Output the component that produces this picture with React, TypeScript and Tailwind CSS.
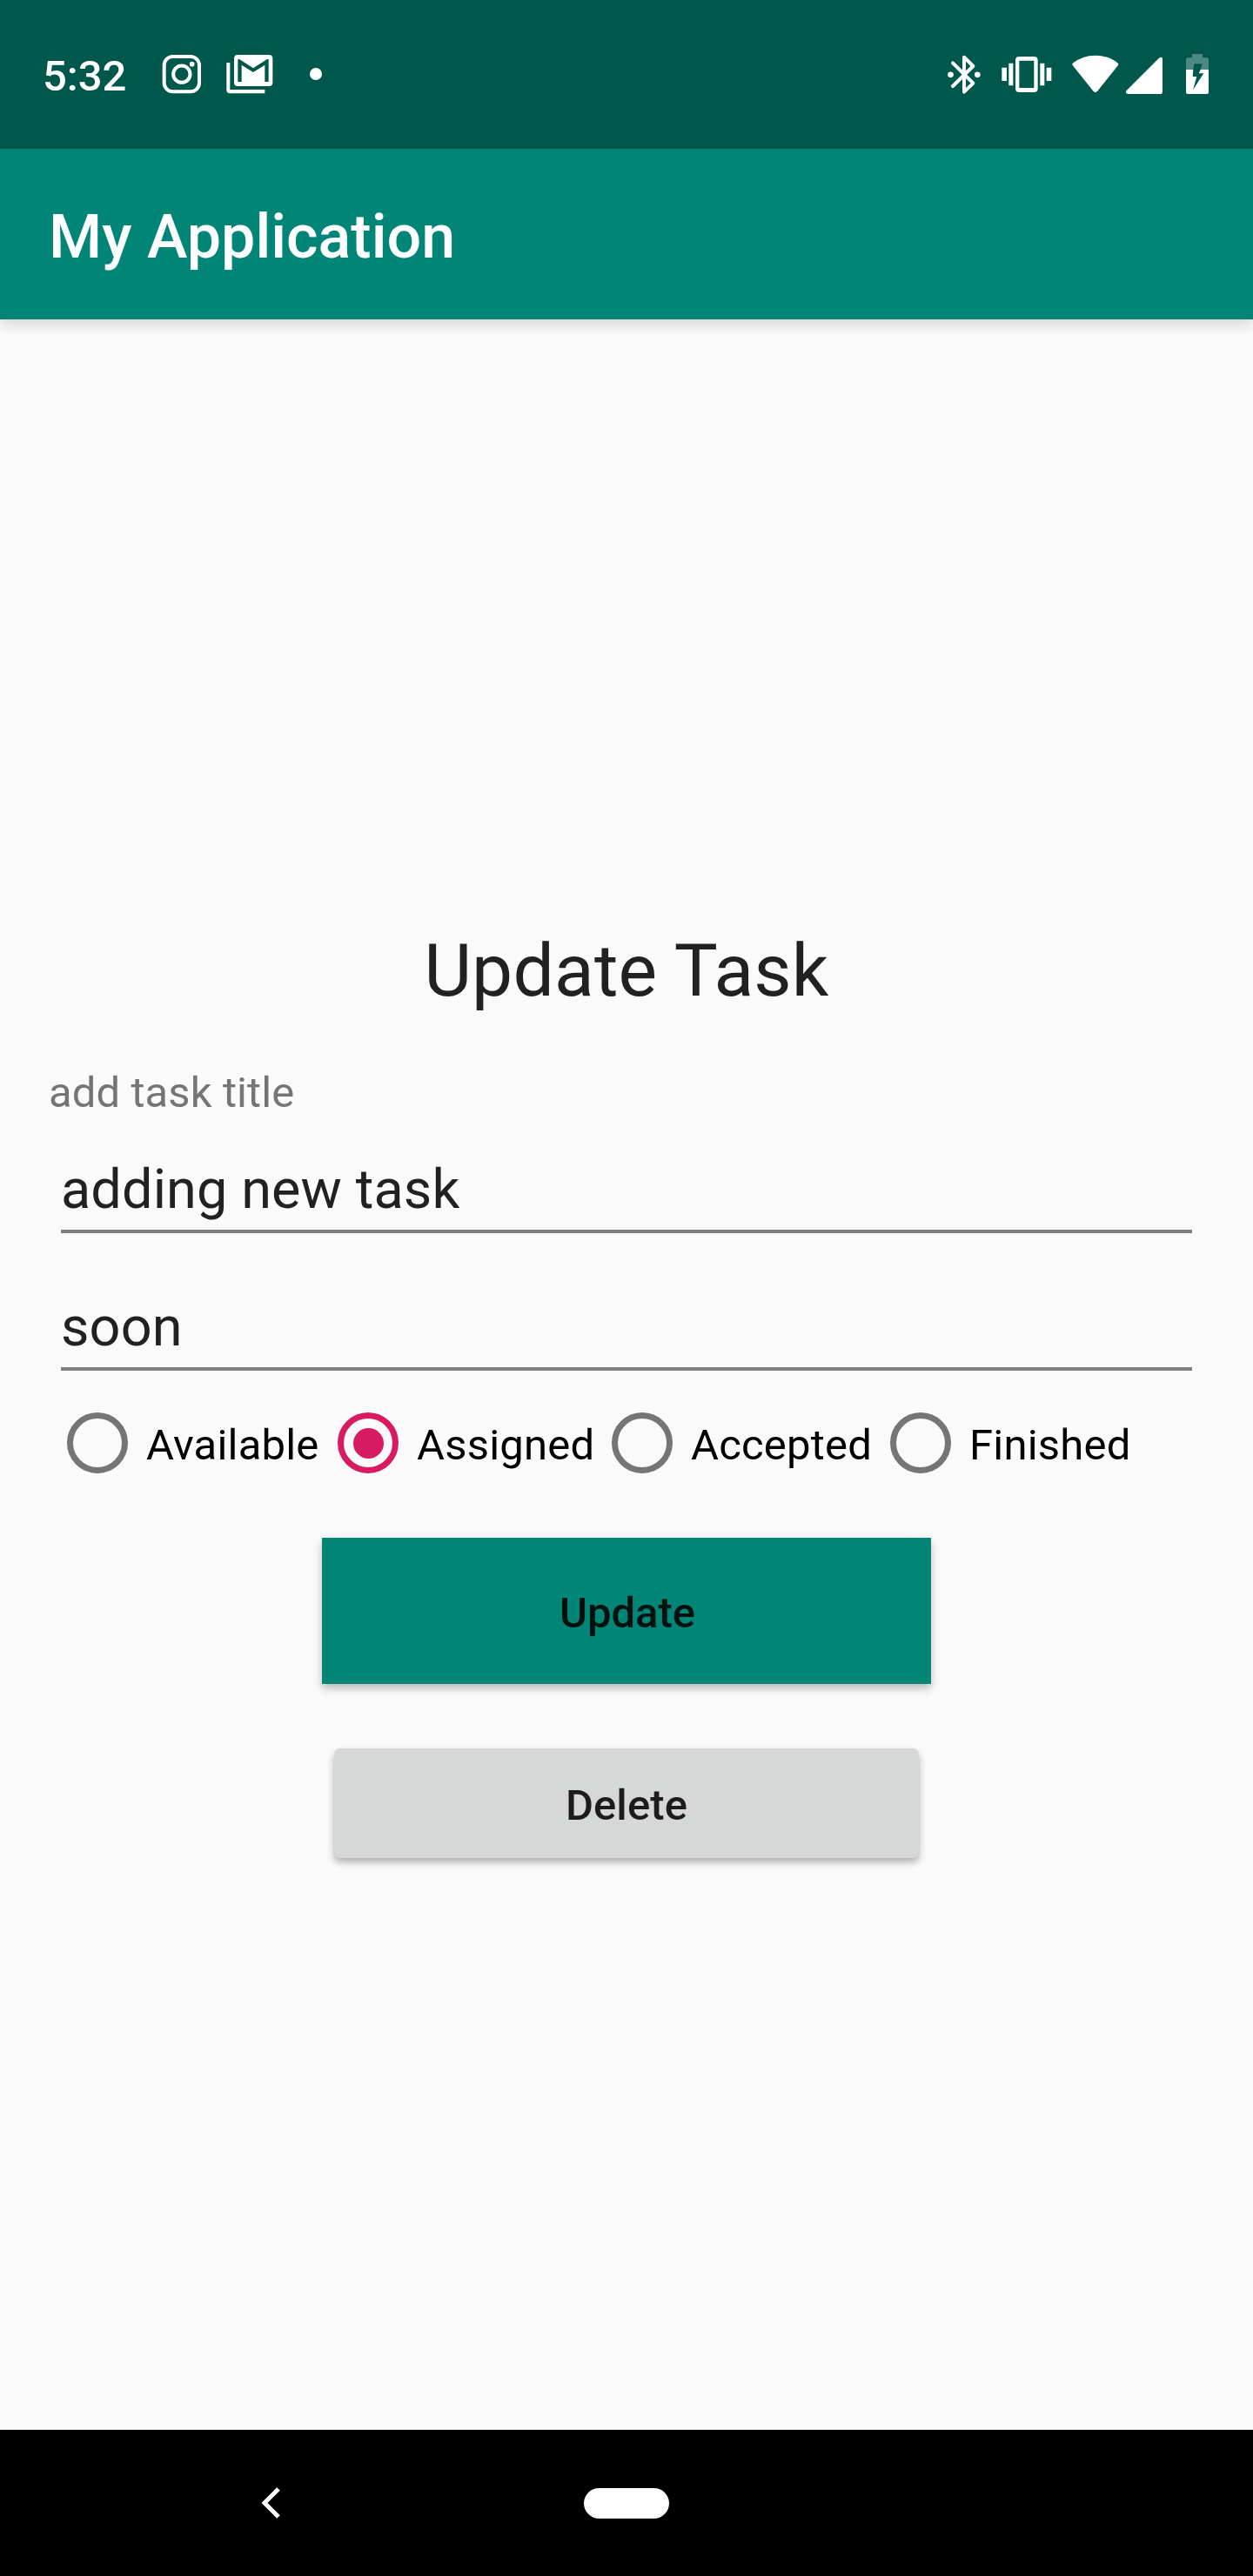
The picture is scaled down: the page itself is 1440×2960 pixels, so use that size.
import React from "react";

function InstagramIcon() {
  return (
    <svg className="h-12 w-12" viewBox="556 96 144 144" fill="none" stroke="#fff" strokeWidth="12">
      <rect x="567" y="105" width="121" height="121" rx="30" />
      <circle cx="627.5" cy="165.5" r="29" />
      <circle cx="663" cy="131" r="8.5" fill="#fff" stroke="none" />
    </svg>
  );
}

function MailStackIcon() {
  return (
    <svg className="h-12 w-14" viewBox="776 96 168 144" fill="#fff">
      <path d="M780 126h12v93h120v13H792q-12 0-12-12z" />
      <path
        fillRule="evenodd"
        d="M819 99h107q13 0 13 13v82q0 13-13 13H819q-13 0-13-13v-82q0-13 13-13z M819 192h13v-58l40 25 40-25v58h13v-78h-5l-48 31-48-31h-5z"
      />
    </svg>
  );
}

function BluetoothIcon() {
  return (
    <svg className="h-12 w-10" viewBox="84 96 120 144" fill="none" stroke="#fff" strokeWidth="12">
      <path d="M105 127L175 197L144 227V107L175 138L105 207" strokeLinecap="round" strokeLinejoin="round" />
      <circle cx="97.500" cy="167.500" r="10" fill="#fff" stroke="none" />
      <circle cx="190" cy="167.500" r="10" fill="#fff" stroke="none" />
    </svg>
  );
}

function VibrateIcon() {
  return (
    <svg className="h-12 w-15" viewBox="269 96 180 144" fill="#fff">
      <path
        fillRule="evenodd"
        d="M333 105h51q13 0 13 13v97q0 13-13 13h-51q-13 0-13-13v-97q0-13 13-13z M333 119v94h51v-94z"
      />
      <path d="M273 143h17v46h-17zM297 128h15v77h-15zM405 128h15v77h-15zM427 143h17v46h-17z" />
    </svg>
  );
}

function WifiIcon() {
  return (
    <svg className="h-12 w-14" viewBox="512 96 168 144" fill="#fff">
      <path d="M517 128Q551 101 595.500 101T674 128Q676 131 674 135L602 225Q595.500 231 589 225L517 135Q515 131 517 128z" />
    </svg>
  );
}

function SignalIcon() {
  return (
    <svg className="h-12 w-11" viewBox="699 96 132 144" fill="#fff">
      <path d="M704 222L816 110Q828 102 828 115V227Q828 234 821 234H709Q698 232 704 222z" />
    </svg>
  );
}

function BatteryIcon() {
  return (
    <svg className="h-12 w-7" viewBox="906 96 84 144" fill="#fff">
      <path
        fillOpacity="0.3"
        fillRule="evenodd"
        d="M930 96h36v13h15q6 0 6 6v35H959L965 130H937L934 150H909v-35q0-6 6-6h15z"
      />
      <path fillRule="evenodd" d="M909 150h25L932 174H946L933 220L970 163H953L959 150h28v78q0 6-6 6h-66q-6 0-6-6z" />
    </svg>
  );
}

function StatusBar() {
  return (
    <header className="flex h-[171px] items-start bg-[#00574b] pt-[62px] text-white">
      <span className="mt-0.5 ml-[49px] h-12 w-[136px] text-[49px] leading-12 font-medium">5:32</span>
      <InstagramIcon />
      <span className="ml-[26px]">
        <MailStackIcon />
      </span>
      <span className="mt-4 ml-[41px] size-3.5 rounded-full bg-white" />
      <div className="mr-[50px] ml-auto flex">
        <BluetoothIcon />
        <span className="ml-[22px]">
          <VibrateIcon />
        </span>
        <span className="ml-[21px]">
          <WifiIcon />
        </span>
        <span className="ml-1.5">
          <SignalIcon />
        </span>
        <span className="ml-[25px]">
          <BatteryIcon />
        </span>
      </div>
    </header>
  );
}

function TextField({ value }: { value: string }) {
  return (
    <div className="mx-3.5 h-[88px] border-b-4 border-[#7f7f7f] pt-px">
      <span className="block h-[74px] text-[63px] leading-[74px] tracking-[0.1px] text-[#212121]">{value}</span>
    </div>
  );
}

function RadioOption({ label, checked, width }: { label: string; checked?: boolean; width: string }) {
  return (
    <label className={`flex items-center ${width}`}>
      <span
        className={`mx-[21px] flex size-[70px] shrink-0 items-center justify-center rounded-full border-[7px] ${
          checked ? "border-[#d81b60]" : "border-[#757575]"
        }`}
      >
        {checked && <span className="size-[35px] rounded-full bg-[#d81b60]" />}
      </span>
      <span className="mt-1.5 text-[49px] leading-[58px] tracking-[0.2px] whitespace-nowrap text-black">{label}</span>
    </label>
  );
}

export default function App() {
  return (
    <div className="flex h-[2960px] w-[1440px] flex-col overflow-hidden bg-[#fafafa] font-['Roboto',sans-serif]">
      <StatusBar />
      <div className="flex h-[196px] items-center bg-[#008577] px-14 pt-1.5 shadow-[0_6px_14px_rgba(0,0,0,0.15)]">
        <h1 className="text-[70px] leading-[82px] font-medium text-white">My Application</h1>
      </div>

      <main className="flex flex-1 flex-col px-14 pt-[700px]">
        <h2 className="h-[98px] text-center text-[84px] leading-[98px] tracking-[0.2px] text-[#212121]">Update Task</h2>
        <p className="mt-[62px] h-[58px] text-[49px] leading-[58px] tracking-[0.1px] text-[#757575]">add task title</p>
        <div className="mt-11">
          <TextField value="adding new task" />
        </div>
        <div className="mt-[70px]">
          <TextField value="soon" />
        </div>
        <div className="mt-[41px] flex h-[84px] items-center">
          <RadioOption label="Available" width="w-[311px]" />
          <RadioOption label="Assigned" width="w-[315px]" checked />
          <RadioOption label="Accepted" width="w-[320px]" />
          <RadioOption label="Finished" width="w-[320px]" />
        </div>
        <button className="mt-[67px] flex h-[168px] w-[700px] items-center justify-center self-center bg-[#008577] pt-1.5 pl-0.5 text-[49px] leading-[58px] font-medium text-[#00110f] shadow-[0_5px_9px_rgba(0,0,0,0.26)]">
          Update
        </button>
        <button className="mt-[74px] flex h-[126px] w-[672px] items-center justify-center self-center rounded-[7px] bg-[#d6d7d7] pt-1.5 text-[49px] leading-[58px] font-medium tracking-[0.1px] text-[#1c1c1c] shadow-[0_5px_9px_rgba(0,0,0,0.3)]">
          Delete
        </button>
      </main>

      <nav className="flex h-[168px] items-center bg-black">
        <svg className="ml-[299px] h-10 w-6" viewBox="0 0 24 40" fill="none" stroke="#fff" strokeWidth="5">
          <path d="M21 4L5 20L21 36" />
        </svg>
        <span className="ml-[348px] h-[35px] w-[98px] rounded-full bg-white" />
      </nav>
    </div>
  );
}
